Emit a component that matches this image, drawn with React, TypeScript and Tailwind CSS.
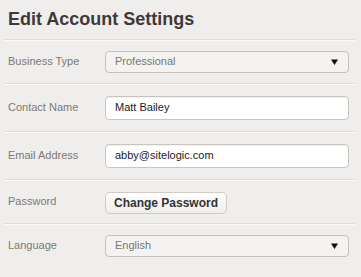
import React from 'react';

const Arrow: React.FC = () => (
  <svg width="7" height="6" viewBox="0 0 7 6" className="shrink-0">
    <path d="M0 0.5 H7 L3.5 6 Z" fill="#111" />
  </svg>
);

const Row: React.FC<{ label: string; tall?: boolean; children: React.ReactNode }> = ({ label, tall, children }) => (
  <div
    className={`flex items-center border-t border-[#dfdcd9] shadow-[inset_0_1px_0_#fbfaf9] pl-[4px] pr-[6px] ${tall ? 'h-[48px]' : 'h-[44px]'}`}
  >
    <div className="w-[97px] shrink-0 text-[11px] text-[#7d7974]">{label}</div>
    <div className="flex-1">{children}</div>
  </div>
);

const SelectBox: React.FC<{ value: string }> = ({ value }) => (
  <div className="flex h-[22px] items-center justify-between rounded-[4px] border border-[#c8bfba] bg-[#f4f3f1] pl-[9px] pr-[10px] text-[11px] text-[#7a7671]">
    <span>{value}</span>
    <Arrow />
  </div>
);

const TextBox: React.FC<{ value: string }> = ({ value }) => (
  <div className="flex h-[24px] items-center rounded-[4px] border border-[#cbc5c0] bg-white pl-[9px] text-[11px] text-[#222] shadow-[inset_0_1px_1px_rgba(0,0,0,0.06)]">
    {value}
  </div>
);

export default function App() {
  return (
    <div className="min-h-screen w-full bg-[#efeeec] pl-[4px] pr-[6px]" style={{ fontFamily: '"Liberation Sans", Arial, sans-serif' }}>
      <h1 className="pl-[4px] pt-[8px] pb-[9px] text-[18px] font-bold leading-[22px] text-[#3d3a38]">
        Edit Account Settings
      </h1>
      <Row label="Business Type">
        <SelectBox value="Professional" />
      </Row>
      <Row label="Contact Name" tall>
        <TextBox value="Matt Bailey" />
      </Row>
      <Row label="Email Address" tall>
        <TextBox value="abby@sitelogic.com" />
      </Row>
      <Row label="Password">
        <button className="h-[22px] rounded-[5px] border border-[#d0cbc6] bg-gradient-to-b from-white to-[#efedeb] px-[8px] text-[12px] font-bold leading-none text-[#333]">
          Change Password
        </button>
      </Row>
      <Row label="Language">
        <SelectBox value="English" />
      </Row>
    </div>
  );
}
